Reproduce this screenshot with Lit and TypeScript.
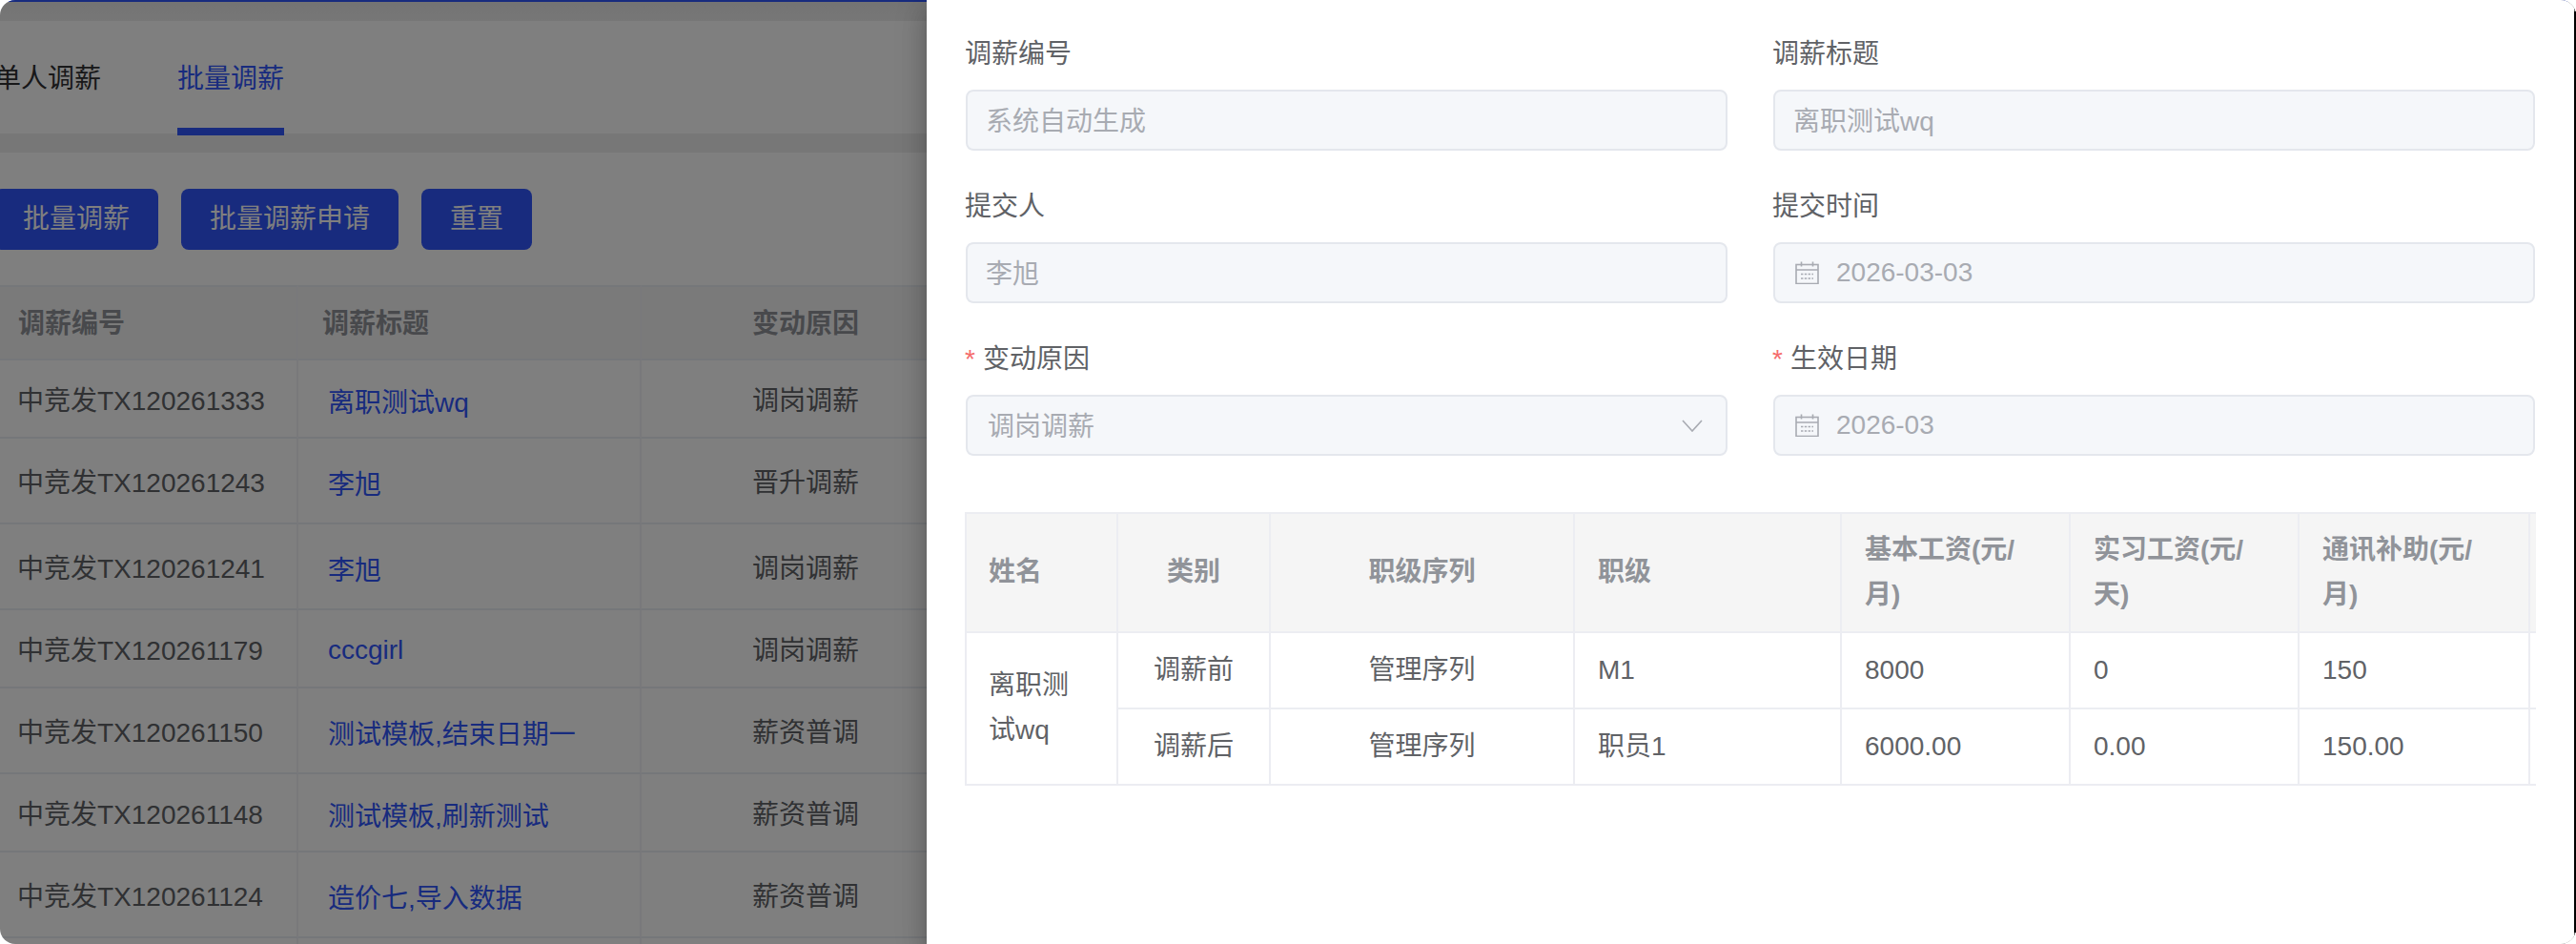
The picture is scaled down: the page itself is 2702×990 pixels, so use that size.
import { LitElement, html, css } from "lit";
import { customElement } from "lit/decorators.js";

const FONT = css`"Liberation Sans", "Noto Sans CJK SC", sans-serif`;

const ROWS = [
  ["中竞发TX120261333", "离职测试wq", "调岗调薪", 82],
  ["中竞发TX120261243", "李旭", "晋升调薪", 90],
  ["中竞发TX120261241", "李旭", "调岗调薪", 90],
  ["中竞发TX120261179", "cccgirl", "调岗调薪", 82],
  ["中竞发TX120261150", "测试模板,结束日期一", "薪资普调", 90],
  ["中竞发TX120261148", "测试模板,刷新测试", "薪资普调", 82],
  ["中竞发TX120261124", "造价七,导入数据", "薪资普调", 90],
  ["", "", "", 90],
];

const calendar = html`<svg class="cal" viewBox="0 0 25 24" width="25" height="24" fill="none" stroke="#a8abb2" stroke-width="1.6">
  <rect x="1" y="3.5" width="23" height="20" />
  <path d="M1 9h23M6.5 0.5v5M18.5 0.5v5" />
  <path d="M6 13.5h13M6 18h13" stroke-dasharray="2.4 1.4" />
</svg>`;

@customElement("app-root")
export class AppRoot extends LitElement {
  static styles = css`
    :host {
      display: block;
      position: relative;
      width: 2702px;
      height: 990px;
      overflow: hidden;
      background: #fff;
      font-family: ${FONT};
      font-size: 28px;
    }
    .frame {
      position: absolute;
      inset: 0;
      border-radius: 16px;
      overflow: hidden;
    }
    .page {
      height: 990px;
      border-top: 2px solid #3056fc;
      box-sizing: border-box;
      background: #fff;
    }
    .band {
      height: 20px;
      background: linear-gradient(#e8e8e8, #eeeeee);
    }
    .tabs {
      height: 118px;
      display: flex;
      margin-left: -46px;
      background: #fff;
      position: relative;
    }
    .tab {
      position: relative;
      padding: 0 40px;
      line-height: 122px;
      color: #303133;
    }
    .tab.on {
      color: #3056fc;
    }
    .tab.on::after {
      content: "";
      position: absolute;
      left: 40px;
      right: 40px;
      top: 112px;
      height: 8px;
      background: #3056fc;
    }
    .strip {
      height: 20px;
      background: #efefef;
    }
    .tools {
      display: flex;
      gap: 24px;
      padding: 38px 0 37px;
      margin-left: -6px;
    }
    .btn {
      height: 64px;
      line-height: 64px;
      padding: 0 30px;
      background: #3056fc;
      color: #fff;
      border-radius: 8px;
    }
    table {
      border-collapse: separate;
      border-spacing: 0;
      table-layout: fixed;
    }
    td,
    th {
      box-sizing: border-box;
      padding: 0;
      font-weight: 400;
    }
    .list {
      margin-left: -6px;
      width: 1025px;
      color: #606266;
    }
    .list th {
      height: 79px;
      background: #f5f5f5;
      color: #909399;
      font-weight: 700;
      border-top: 2px solid #ebeef5;
      border-bottom: 2px solid #ebeef5;
      border-right: 2px solid #f2f3f7;
      text-align: left;
      padding: 0 0 3px 25px;
    }
    .list td {
      border-bottom: 2px solid #ebeef5;
      border-right: 2px solid #f2f3f7;
      padding-left: 24px;
    }
    .list .link {
      color: #3056fc;
      padding: 3px 0 0 31px;
    }
    .list .ctr {
      text-align: center;
      padding-left: 0;
    }
    .mask {
      position: absolute;
      inset: 0;
      background: rgba(0, 0, 0, 0.5);
    }
    .drawer {
      position: absolute;
      left: 972px;
      top: 0;
      bottom: 0;
      width: 1728px;
      box-sizing: border-box;
      background: #fff;
      padding: 34px 41px 0;
      box-shadow: 0 8px 10px -5px rgba(0, 0, 0, 0.2), 0 16px 24px 2px rgba(0, 0, 0, 0.14), 0 6px 30px 5px rgba(0, 0, 0, 0.12);
    }
    .grid {
      display: grid;
      grid-template-columns: 1fr 1fr;
      column-gap: 48px;
      row-gap: 36px;
      width: 1646px;
    }
    .label {
      height: 46px;
      line-height: 46px;
      margin: 0 0 14px -1px;
      color: #606266;
    }
    .star {
      color: #f56c6c;
      margin-right: 8px;
    }
    .input {
      height: 64px;
      box-sizing: border-box;
      border: 2px solid #e4e7ed;
      border-radius: 8px;
      background: #f5f7fa;
      color: #a8abb2;
      display: flex;
      align-items: center;
      padding: 0 19px 2px;
    }
    .input.date {
      padding-bottom: 0;
    }
    .cal {
      margin: 0 18px 0 2px;
      flex: none;
    }
    .select {
      justify-content: space-between;
      padding: 0 24px 2px 21px;
    }
    .select svg {
      margin-top: 2px;
    }
    .wrap {
      margin: 59px 0 0 -1px;
      width: 1648px;
      overflow: hidden;
      border: 2px solid #ecedf2;
      border-right: 0;
      box-sizing: border-box;
      border-bottom: 0;
    }
    .detail {
      width: 1648px;
      color: #606266;
    }
    .detail th,
    .detail td {
      border-right: 2px solid #ecedf2;
      border-bottom: 2px solid #ecedf2;
      padding: 0 24px 2px;
      line-height: 47px;
      text-align: left;
    }
    .detail th {
      height: 125px;
      background: #f5f5f5;
      color: #909399;
      font-weight: 700;
    }
    .detail td {
      height: 80px;
    }
    .detail .ctr {
      text-align: center;
    }
    .detail .first {
      padding-left: 23px;
    }
    .detail .tail {
      padding: 0;
    }
    .edge {
      position: absolute;
      right: 0;
      top: 12px;
      bottom: 12px;
      width: 2px;
      background: #000;
    }
  `;

  private field(label: string, value: string, opts: { star?: boolean; cal?: boolean; select?: boolean } = {}) {
    return html`<div>
      <div class="label">${opts.star ? html`<span class="star">*</span>` : ""}${label}</div>
      <div class="input ${opts.select ? "select" : ""} ${opts.cal ? "date" : ""}">
        ${opts.cal ? calendar : ""}<span>${value}</span>
        ${opts.select
          ? html`<svg viewBox="0 0 22 13" width="22" height="13" fill="none" stroke="#a8abb2" stroke-width="1.6"><path d="M1 1l10 11L21 1" /></svg>`
          : ""}
      </div>
    </div>`;
  }

  render() {
    return html`
      <div class="frame">
        <div class="page">
          <div class="band"></div>
          <div class="tabs">
            <div class="tab">单人调薪</div>
            <div class="tab on">批量调薪</div>
          </div>
          <div class="strip"></div>
          <div class="tools">
            <div class="btn">批量调薪</div>
            <div class="btn">批量调薪申请</div>
            <div class="btn">重置</div>
          </div>
          <table class="list">
            <colgroup>
              <col style="width:319px" />
              <col style="width:360px" />
              <col style="width:346px" />
            </colgroup>
            <tr>
              <th>调薪编号</th>
              <th>调薪标题</th>
              <th class="ctr">变动原因</th>
            </tr>
            ${ROWS.map(
              (r) => html`<tr style="height:${r[3]}px">
                <td>${r[0]}</td>
                <td class="link">${r[1]}</td>
                <td class="ctr">${r[2]}</td>
              </tr>`
            )}
          </table>
        </div>
        <div class="mask"></div>
        <div class="drawer">
          <div class="grid">
            ${this.field("调薪编号", "系统自动生成")}
            ${this.field("调薪标题", "离职测试wq")}
            ${this.field("提交人", "李旭")}
            ${this.field("提交时间", "2026-03-03", { cal: true })}
            ${this.field("变动原因", "调岗调薪", { star: true, select: true })}
            ${this.field("生效日期", "2026-03", { star: true, cal: true })}
          </div>
          <div class="wrap">
            <table class="detail">
              <colgroup>
                <col style="width:159px" />
                <col style="width:160px" />
                <col style="width:319px" />
                <col style="width:280px" />
                <col style="width:240px" />
                <col style="width:240px" />
                <col style="width:242px" />
                <col style="width:8px" />
              </colgroup>
              <tr>
                <th class="first">姓名</th>
                <th class="ctr">类别</th>
                <th class="ctr">职级序列</th>
                <th>职级</th>
                <th>基本工资(元/月)</th>
                <th>实习工资(元/天)</th>
                <th>通讯补助(元/月)</th>
                <th class="tail"></th>
              </tr>
              <tr>
                <td rowspan="2" class="first">离职测试wq</td>
                <td class="ctr">调薪前</td>
                <td class="ctr">管理序列</td>
                <td>M1</td>
                <td>8000</td>
                <td>0</td>
                <td>150</td>
                <td class="tail"></td>
              </tr>
              <tr>
                <td class="ctr">调薪后</td>
                <td class="ctr">管理序列</td>
                <td>职员1</td>
                <td>6000.00</td>
                <td>0.00</td>
                <td>150.00</td>
                <td class="tail"></td>
              </tr>
            </table>
          </div>
        </div>
      </div>
      <div class="edge"></div>
    `;
  }
}
